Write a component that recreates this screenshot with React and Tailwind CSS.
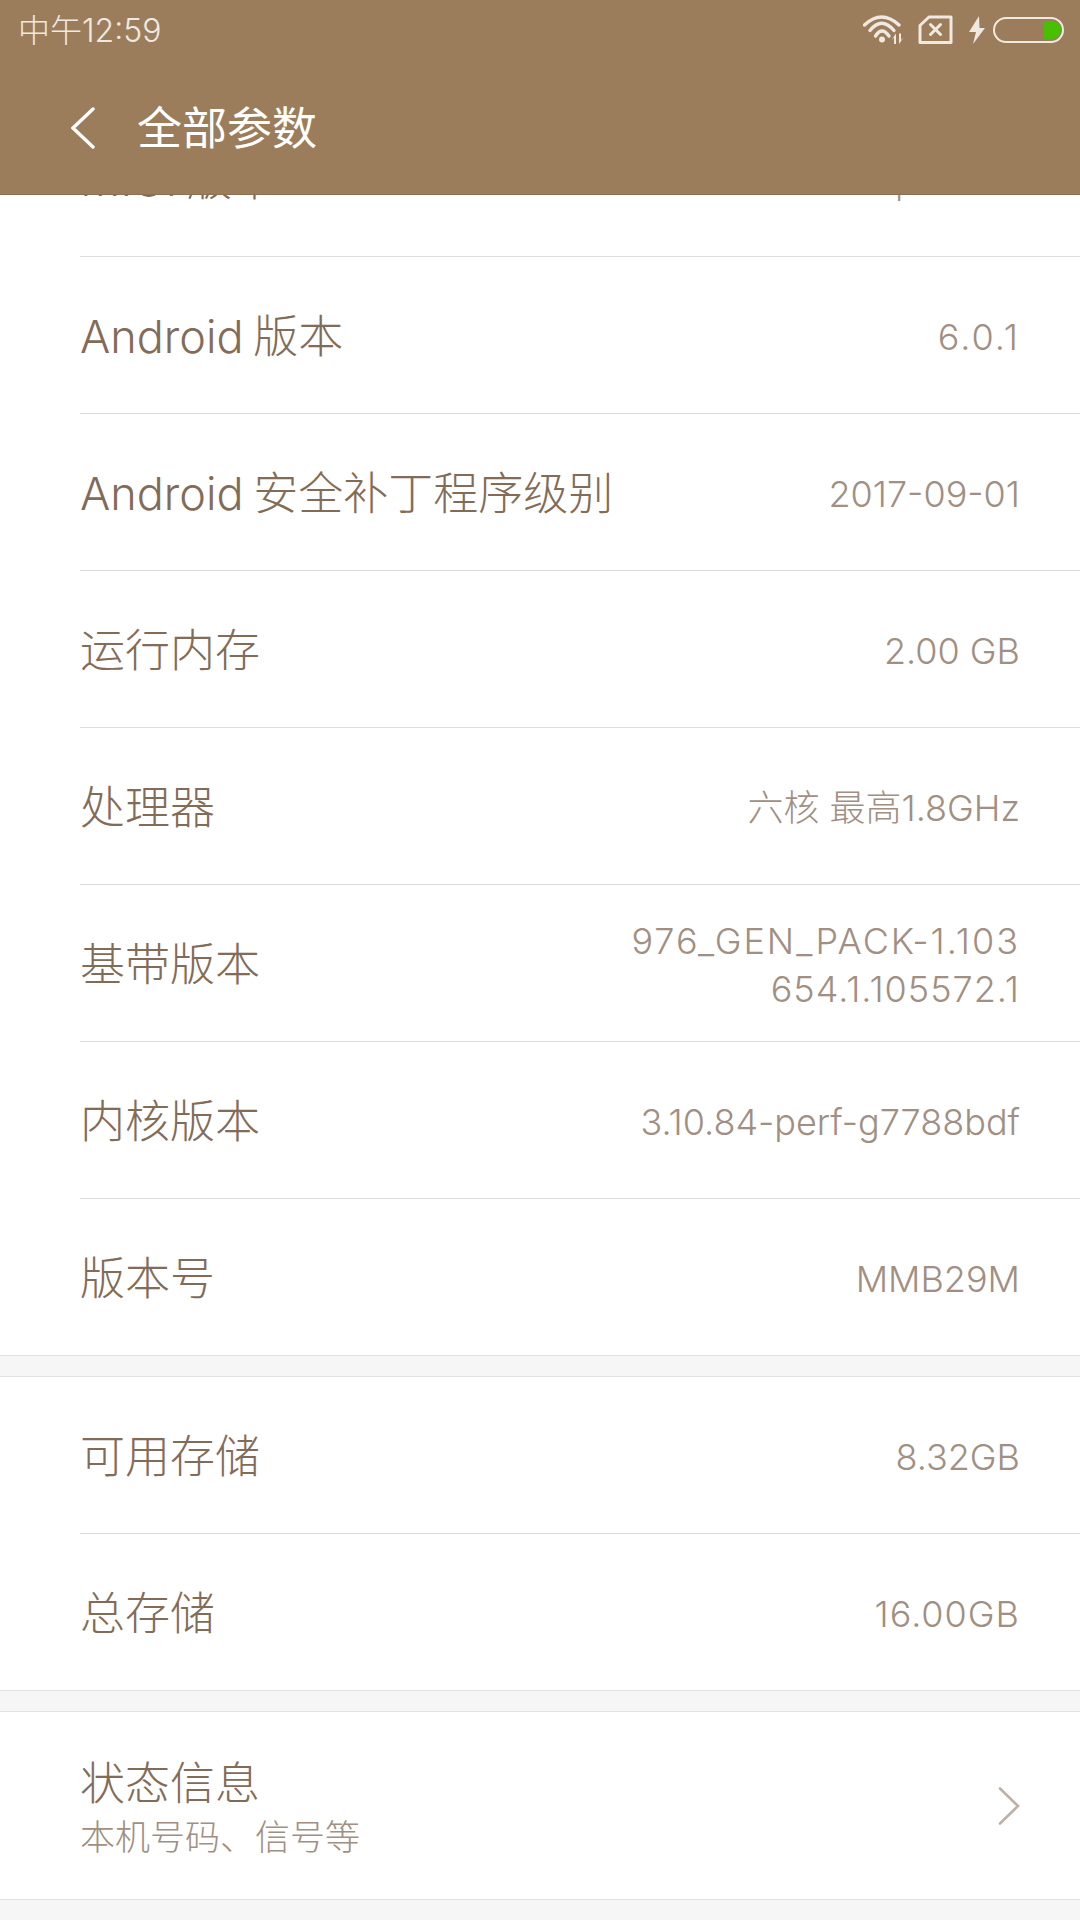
import React from "react";

const FONT = "font-['Inter','Noto_Sans_CJK_SC',sans-serif]";

function Row({ label, value, last }) {
  return (
    <div className="pl-20">
      <div className={`flex items-center justify-between pr-[60px] pt-[3px] ${last ? "h-[156px]" : "h-[157px] border-b border-[#dcdcdc]"}`}>
        <span className="text-[45px] font-light whitespace-nowrap text-[#826c58] [word-spacing:-3px]">{label}</span>
        <span className="text-right text-[36px] font-light leading-[48px] text-[#a08f82]">{value}</span>
      </div>
    </div>
  );
}

function Gap() {
  return <div className="h-[22px] border-y border-[#e2e2e2] bg-[#f6f6f6]" />;
}

function StatusIcons() {
  return (
    <div className="mb-[2px] flex items-center">
      {/* wifi */}
      <svg width="41" height="30" viewBox="0 0 41 30" fill="none" stroke="#efe9e2" strokeWidth="3.4" strokeLinecap="round">
        <path d="M1.5 10Q18.5 -6 36 10" />
        <path d="M7 15.5Q18.5 1 31 15.5" />
        <path d="M12.5 21Q19 11 26 21" />
        <circle cx="19" cy="24.5" r="3" fill="#efe9e2" stroke="none" />
        <path d="M33 18.5V29H31V22.5L28.5 25ZM36 29V18.5H38V25L40.5 22.5Z" fill="#efe9e2" stroke="none" />
      </svg>
      {/* no sim */}
      <svg className="ml-[14px]" width="35" height="30" viewBox="0 0 35 30" fill="none" stroke="#efe9e2" strokeWidth="3">
        <path d="M11 2H33V27.5H2V10.5Z" strokeLinejoin="round" />
        <path d="M12.5 9.5L22.5 19.5M22.5 9.5L12.5 19.5" strokeLinecap="round" />
      </svg>
      {/* charging */}
      <svg className="ml-[16px]" width="16" height="30" viewBox="0 0 16 30" fill="#efe9e2">
        <path d="M10 1L0 17H7L4 29L16 13H10.5Z" />
      </svg>
      {/* battery */}
      <div className="ml-2 flex h-[26px] w-[71px] items-center justify-end rounded-full border-2 border-[#efe9e2] pr-px">
        <div className="h-[18px] w-[17px] rounded-r-full bg-[#46c000]" />
      </div>
    </div>
  );
}

export default function App() {
  return (
    <div className={`h-[1920px] w-[1080px] overflow-hidden bg-[#f6f6f6] ${FONT}`}>
      {/* Header sits over the scrolled list */}
      <div className="relative z-10 h-[195px] border-b border-[#8c7253] bg-[#9b7d5b]">
        <div className="flex h-[62px] items-center justify-between pl-[18px] pr-4">
          <span className="text-[32px] font-light text-[#efe9e2]">中午12:59</span>
          <StatusIcons />
        </div>
        <div className="mt-[41px] flex h-[50px] items-center pl-[71px]">
          <svg width="24" height="42" viewBox="0 0 24 42" fill="none" stroke="#fff" strokeWidth="3.4" strokeLinecap="round">
            <path d="M22 2L2 21L22 40" />
          </svg>
          <span className="ml-[42px] pt-[2px] text-[45px] text-white">全部参数</span>
        </div>
      </div>

      {/* List, scrolled so the first row is cut by the header */}
      <div className="-mt-[95px]">
        <div className="bg-white">
          <Row
            label="MIUI 版本"
            value={<>MIUI 9.6 | <span className="inline-block -translate-y-[5px] text-[35px]">稳定版</span></>}
          />
          <Row label="Android 版本" value={<span className="tracking-[2px]">6.0.1</span>} />
          <Row label="Android 安全补丁程序级别" value="2017-09-01" />
          <Row label="运行内存" value="2.00 GB" />
          <Row label="处理器" value="六核 最高1.8GHz" />
          <Row
            label="基带版本"
            value={
              <>
                <span className="tracking-[2px]">976_GEN_PACK-1.103</span>
                <br />
                <span className="tracking-[1px]">654.1.105572.1</span>
              </>
            }
          />
          <Row label="内核版本" value="3.10.84-perf-g7788bdf" />
          <Row label="版本号" value="MMB29M" last />
        </div>
        <Gap />
        <div className="bg-white">
          <Row label="可用存储" value="8.32GB" />
          <Row label="总存储" value={<span className="tracking-[1px]">16.00GB</span>} last />
        </div>
        <Gap />
        <div className="flex h-[188px] items-center justify-between border-b border-[#e2e2e2] bg-white pl-20 pr-[60px]">
          <div className="pt-[5px]">
            <div className="text-[45px] font-light leading-[50px] text-[#826c58]">状态信息</div>
            <div className="mt-[7px] text-[35px] font-light leading-[42px] text-[#a08f82]">本机号码、信号等</div>
          </div>
          <svg width="22" height="38" viewBox="0 0 22 38" fill="none" stroke="#bdb0a6" strokeWidth="2.6" strokeLinecap="round">
            <path d="M2 1.5L20 19L2 36.5" />
          </svg>
        </div>
      </div>
    </div>
  );
}
